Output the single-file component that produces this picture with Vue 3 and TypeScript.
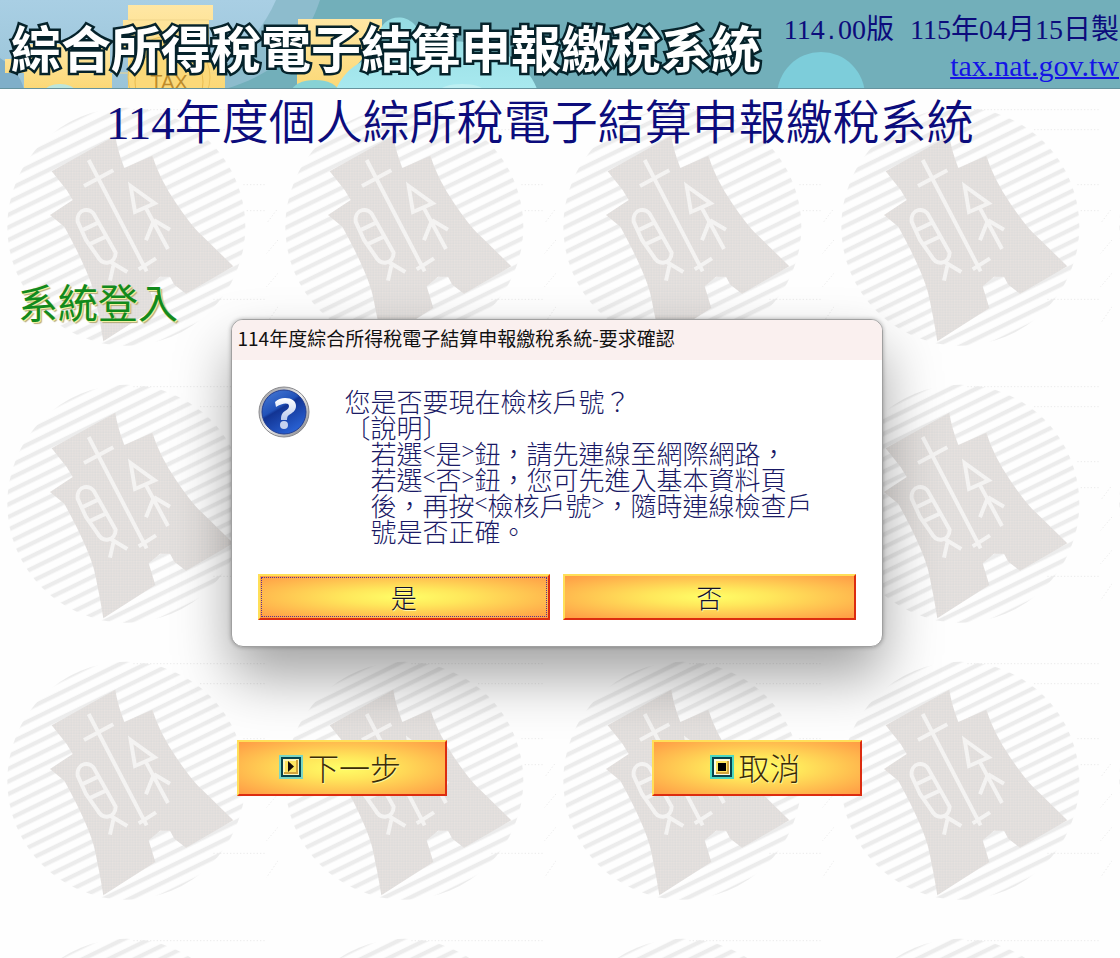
<script setup lang="ts">
import { ref } from 'vue'

const version = { major: '114', minor: '00版', date: '115年04月15日製' }
const site = { label: 'tax.nat.gov.tw', href: 'https://tax.nat.gov.tw' }
const dialogOpen = ref(true)

function closeDialog(): void {
  dialogOpen.value = false
}
</script>

<template>
  <div class="page">
    <header class="banner">
      <svg class="banner-art" viewBox="0 0 1120 89" preserveAspectRatio="xMinYMin slice" aria-hidden="true">
        <defs>
          <linearGradient id="sky" x1="0" y1="0" x2="0" y2="1">
            <stop offset="0" stop-color="#a9cfe4" />
            <stop offset="1" stop-color="#9ac4d8" />
          </linearGradient>
          <linearGradient id="gold" x1="0" y1="0" x2="0" y2="1">
            <stop offset="0" stop-color="#ffe7a4" />
            <stop offset="1" stop-color="#fbd876" />
          </linearGradient>
          <linearGradient id="cloud" x1="0" y1="0" x2="0" y2="1">
            <stop offset="0" stop-color="#94dbe2" />
            <stop offset="1" stop-color="#a8e9ef" />
          </linearGradient>
        </defs>
        <rect width="1120" height="89" fill="#72afba" />
        <path d="M0 0H320C305 45 275 75 225 89H0Z" fill="#8dbccd" />
        <path d="M0 0H276C262 32 235 62 195 89H0Z" fill="url(#sky)" />
        <path d="M0 58C12 66 20 75 24 89H0Z" fill="#80afc9" />
        <path d="M5 59H24V44H110V73H112V89H24V73H5Z" fill="url(#gold)" />
        <ellipse cx="60" cy="91" rx="15" ry="7" fill="#bce6dd" />
        <path d="M128 5H213V20H209V56H222V73H225V89H128V56H123V20H128Z" fill="url(#gold)" />
        <path d="M128 20H209M123 39H209M112 73H224" stroke="#f0d58b" stroke-width="1" />
        <circle cx="169" cy="77" r="41" fill="#fbd979" stroke="#edc45e" />
        <circle cx="169" cy="82" r="34" fill="none" stroke="#e8bc50" />
        <text x="169" y="89" text-anchor="middle" font-family="Liberation Sans, sans-serif" font-size="20" fill="#bd8b2b">TAX</text>
        <path d="M298 19H382V34L338 89H297V70H299V34H298Z" fill="url(#gold)" />
        <path d="M336 89C345 70 360 59 378 57V38C380 12 417 8 423 43C441 46 449 40 464 42C500 46 527 63 537 89Z" fill="url(#cloud)" />
        <ellipse cx="315" cy="91" rx="23" ry="11" fill="#87d2d5" />
        <ellipse cx="462" cy="92" rx="23" ry="8" fill="#bdeff2" />
        <circle cx="821" cy="96" r="44" fill="#7dcdda" />
        <path d="M0 88.500H1120" stroke="#66939e" stroke-width="1" />
      </svg>
      <strong class="brand">綜合所得稅電子結算申報繳稅系統</strong>
      <div class="release">
        <p class="version">
          <span>{{ version.major }}<span class="dot">.</span>{{ version.minor }}</span>
          <span>{{ version.date }}</span>
        </p>
        <a class="site" :href="site.href">{{ site.label }}</a>
      </div>
    </header>

    <main class="content">
      <svg class="watermark" aria-hidden="true">
        <defs>
          <pattern id="stripes" width="40" height="34" patternUnits="userSpaceOnUse" patternTransform="rotate(-26)">
            <rect y="8" width="40" height="13" fill="#ececec" />
          </pattern>
          <pattern id="weave" width="8" height="8" patternUnits="userSpaceOnUse">
            <rect width="8" height="8" fill="#e2dfdd" />
            <rect width="4" height="4" fill="#e8e2df" />
            <rect x="4" y="4" width="4" height="4" fill="#dddcdb" />
          </pattern>
          <pattern id="emblem" x="0" y="11" width="278" height="277" viewBox="0 0 834 831" patternUnits="userSpaceOnUse">
            <g fill="none" stroke="#ebebeb" stroke-width="3" stroke-dasharray="4 6">
              <path d="M400 29H800M600 89H800M730 254H800M740 332H800M640 598H800" />
              <path d="M830 330L800 370M834 420L800 460M834 520L800 560M834 620L800 670" />
            </g>
            <circle cx="379" cy="380" r="357" fill="url(#stripes)" />
            <path
              d="M155 214L346 107Q352 150 373 204L457 167Q478 235 528 309T608 409L700 499L558 581L523 554L510 530H480L446 559L466 624L310 724Q300 660 285 590T193 380L150 345L218 300L200 270Z"
              fill="url(#weave)"
            />
            <g fill="none" stroke="#f4f3f2" stroke-width="12">
              <path d="M266 180L440 514M252 258L340 211M416 508L468 475" />
              <path d="M258 420L233 365C229 325 273 318 286 350L347 458C346 493 308 499 292 468ZM246 391L296 367M266 434L319 409M332 486L382 516M340 497L330 542" />
              <path d="M392 258L464 310L405 336ZM437 323L504 447M462 361L438 421M462 361L510 389" />
            </g>
          </pattern>
        </defs>
        <rect width="100%" height="100%" fill="url(#emblem)" />
      </svg>

      <h1 class="title">114年度個人綜所稅電子結算申報繳稅系統</h1>
      <h2 class="section">系統登入</h2>

      <div class="actions">
        <button type="button" class="gold-button step">
          <svg class="step-icon" viewBox="0 0 24 24" aria-hidden="true">
            <rect width="24" height="24" fill="#79d6c5" />
            <rect x="2" y="2" width="20" height="20" fill="#07434c" />
            <rect x="4" y="4" width="16" height="16" fill="#fff7bd" />
            <path d="M5 19V17H17V5H19V19Z" fill="#d1a43c" />
            <rect x="6" y="6" width="11" height="11" fill="#ffe65f" />
            <path d="M9 6V17L15 11.500Z" fill="#160c08" />
          </svg>
          <span>下一步</span>
        </button>
        <button type="button" class="gold-button step">
          <svg class="step-icon" viewBox="0 0 24 24" aria-hidden="true">
            <rect width="24" height="24" fill="#4bd8c2" />
            <rect x="2" y="2" width="20" height="20" fill="#07434c" />
            <rect x="4" y="4" width="16" height="16" fill="#fffce1" />
            <path d="M6 19V17H17V6H19V19Z" fill="#d1a43c" />
            <rect x="6" y="6" width="11" height="11" fill="#ffe65f" />
            <rect x="8" y="8" width="8" height="8" fill="#000" />
          </svg>
          <span>取消</span>
        </button>
      </div>

      <div v-if="dialogOpen" class="overlay">
        <section class="dialog" role="dialog" aria-modal="true" aria-labelledby="dialog-title">
          <h3 id="dialog-title" class="dialog-title">114年度綜合所得稅電子結算申報繳稅系統-要求確認</h3>
          <div class="dialog-body">
            <svg class="question" viewBox="0 0 54 54" aria-hidden="true">
              <defs>
                <linearGradient id="ring" x1="0" y1="0" x2="1" y2="1">
                  <stop offset="0" stop-color="#8d8d91" />
                  <stop offset="0.500" stop-color="#eeeeef" />
                  <stop offset="1" stop-color="#77777c" />
                </linearGradient>
                <linearGradient id="ball" x1="0" y1="0" x2="0.600" y2="1">
                  <stop offset="0" stop-color="#4a7ed8" />
                  <stop offset="0.450" stop-color="#2152b9" />
                  <stop offset="0.500" stop-color="#123493" />
                  <stop offset="1" stop-color="#2860d2" />
                </linearGradient>
                <linearGradient id="mark" x1="0" y1="0" x2="0" y2="1">
                  <stop offset="0" stop-color="#ffffff" />
                  <stop offset="1" stop-color="#b9c9ed" />
                </linearGradient>
              </defs>
              <circle cx="26" cy="26" r="25" fill="url(#ring)" stroke="#88888c" />
              <circle cx="26" cy="26" r="22" fill="url(#ball)" stroke="#213d92" />
              <path
                d="M17 16Q21 12 27 12C34 12 38 15 38 20C38 25 34 27 31 29Q29 30 29 34H23C23 29 24 27 27 25C30 23 31 22 31 20C31 16 24 17 18 21Z"
                fill="url(#mark)"
              />
              <circle cx="26" cy="39" r="4" fill="#c6d3ef" />
            </svg>
            <div class="message">
              <p>您是否要現在檢核戶號？</p>
              <p>〔說明〕</p>
              <div class="notes">
                <p>若選<span class="angle">&lt;</span>是<span class="angle">&gt;</span>鈕，請先連線至網際網路，</p>
                <p>若選<span class="angle">&lt;</span>否<span class="angle">&gt;</span>鈕，您可先進入基本資料頁</p>
                <p>後，再按<span class="angle">&lt;</span>檢核戶號<span class="angle">&gt;</span>，隨時連線檢查戶</p>
                <p>號是否正確。</p>
              </div>
            </div>
          </div>
          <div class="dialog-actions">
            <button type="button" class="gold-button choice preferred" @click="closeDialog">是</button>
            <button type="button" class="gold-button choice" @click="closeDialog">否</button>
          </div>
        </section>
      </div>
    </main>
  </div>
</template>

<style>
body {
  margin: 0;
  background: #fefefe;
}
</style>

<style scoped>
.page {
  min-height: 100vh;
  display: flex;
  flex-direction: column;
  overflow: hidden;
  font-family: "Liberation Serif", "Noto Sans CJK TC", serif;
  color: #0c0c7c;
}

h1,
h2,
h3,
p {
  margin: 0;
  font-weight: 300;
}

.banner {
  position: relative;
  display: flex;
  justify-content: space-between;
  height: 89px;
  background: #72afba;
}

.banner-art {
  position: absolute;
  inset: 0;
  width: 100%;
  height: 100%;
}

.brand {
  position: relative;
  padding: 10px 0 0 11px;
  font-family: "Noto Sans CJK TC", sans-serif;
  font-size: 50px;
  line-height: 72px;
  font-weight: 700;
  white-space: nowrap;
  color: #fff;
  -webkit-text-stroke: 5px #06232b;
  paint-order: stroke fill;
  text-shadow: 1px 1px 1px #06232b;
}

.release {
  position: relative;
  display: flex;
  flex-direction: column;
  align-items: flex-end;
  padding: 12px 1px 0 0;
  white-space: nowrap;
}

.version {
  display: flex;
  gap: 16px;
  font-size: 28px;
  line-height: 36px;
  font-weight: 400;
}

.dot {
  font-family: "Liberation Mono", monospace;
  font-size: 22px;
  line-height: 1;
}

.site {
  font-size: 30px;
  line-height: 36px;
  color: #1414e6;
  text-decoration-thickness: 2px;
}

.content {
  position: relative;
  flex: 1;
  display: flex;
  flex-direction: column;
  background: #fefefe;
}

.watermark {
  position: absolute;
  inset: 0;
  width: 100%;
  height: 100%;
}

.title {
  position: relative;
  padding: 0 40px 0 0;
  margin-top: 4px;
  text-align: center;
  font-size: 47px;
  line-height: 60px;
  font-weight: 350;
  white-space: nowrap;
}

.section {
  position: relative;
  margin: 124px 0 0 18px;
  font-size: 40px;
  line-height: 56px;
  font-weight: 400;
  color: #128a1c;
  text-shadow: 1px 1px 0 #f2f2a0, 2px 2px 1px #b4a878;
}

.actions {
  position: relative;
  display: flex;
  justify-content: center;
  gap: 205px;
  margin-top: 407px;
  padding-right: 21px;
}

.gold-button {
  border: 2px solid;
  border-color: #ffdf58 #dc2c10 #dc2c10 #ffdf58;
  border-radius: 0;
  padding: 0;
  background: radial-gradient(ellipse at center, #ffff67 0%, #ffe75b 30%, #ffa548 90%, #ff9c42 100%);
  font-family: "Noto Sans CJK TC", sans-serif;
  font-weight: 300;
  cursor: pointer;
}

.step {
  display: flex;
  align-items: center;
  justify-content: center;
  gap: 5px;
  width: 210px;
  height: 56px;
  padding: 0 4px 3px 0;
  font-size: 31px;
  line-height: 40px;
  color: #3a2c08;
  text-shadow: 1px 1px 0 #fff39a;
}

.step-icon {
  width: 24px;
  height: 24px;
}

.overlay {
  position: absolute;
  top: 230px;
  left: 0;
  right: 0;
  display: flex;
  justify-content: center;
  padding-right: 7px;
}

.dialog {
  box-sizing: border-box;
  width: 652px;
  border: 1px solid #a0a0a0;
  border-radius: 12px;
  overflow: hidden;
  background: #fff;
  box-shadow: 0 0 4px rgba(0, 0, 0, 0.3), 0 30px 56px rgba(0, 0, 0, 0.36);
}

.dialog-title {
  padding: 0 6px 4px;
  background: #faf0ef;
  font-family: "Noto Sans CJK TC", sans-serif;
  font-size: 19px;
  line-height: 36px;
  font-weight: 400;
  color: #111;
}

.dialog-body {
  display: flex;
  gap: 33px;
  padding: 26px 26px 0;
}

.question {
  flex: none;
  width: 54px;
  height: 54px;
}

.message {
  padding-top: 2px;
  font-family: "Noto Sans CJK TC", sans-serif;
  font-size: 26px;
  line-height: 26px;
  white-space: nowrap;
  color: #191965;
}

.notes {
  padding-left: 26px;
}

.angle {
  font-family: "Liberation Serif", serif;
  font-size: 23px;
  line-height: 1;
  vertical-align: top;
}

.dialog-actions {
  display: grid;
  grid-template-columns: 1fr 1fr;
  gap: 13px;
  padding: 30px 26px 26px;
}

.choice {
  height: 46px;
  font-size: 26px;
  line-height: 40px;
  color: #10102c;
  text-shadow: 1px 1px 0 #fff8b0;
}

.preferred {
  outline: 1px dotted #5c3090;
  outline-offset: -4px;
}
</style>
